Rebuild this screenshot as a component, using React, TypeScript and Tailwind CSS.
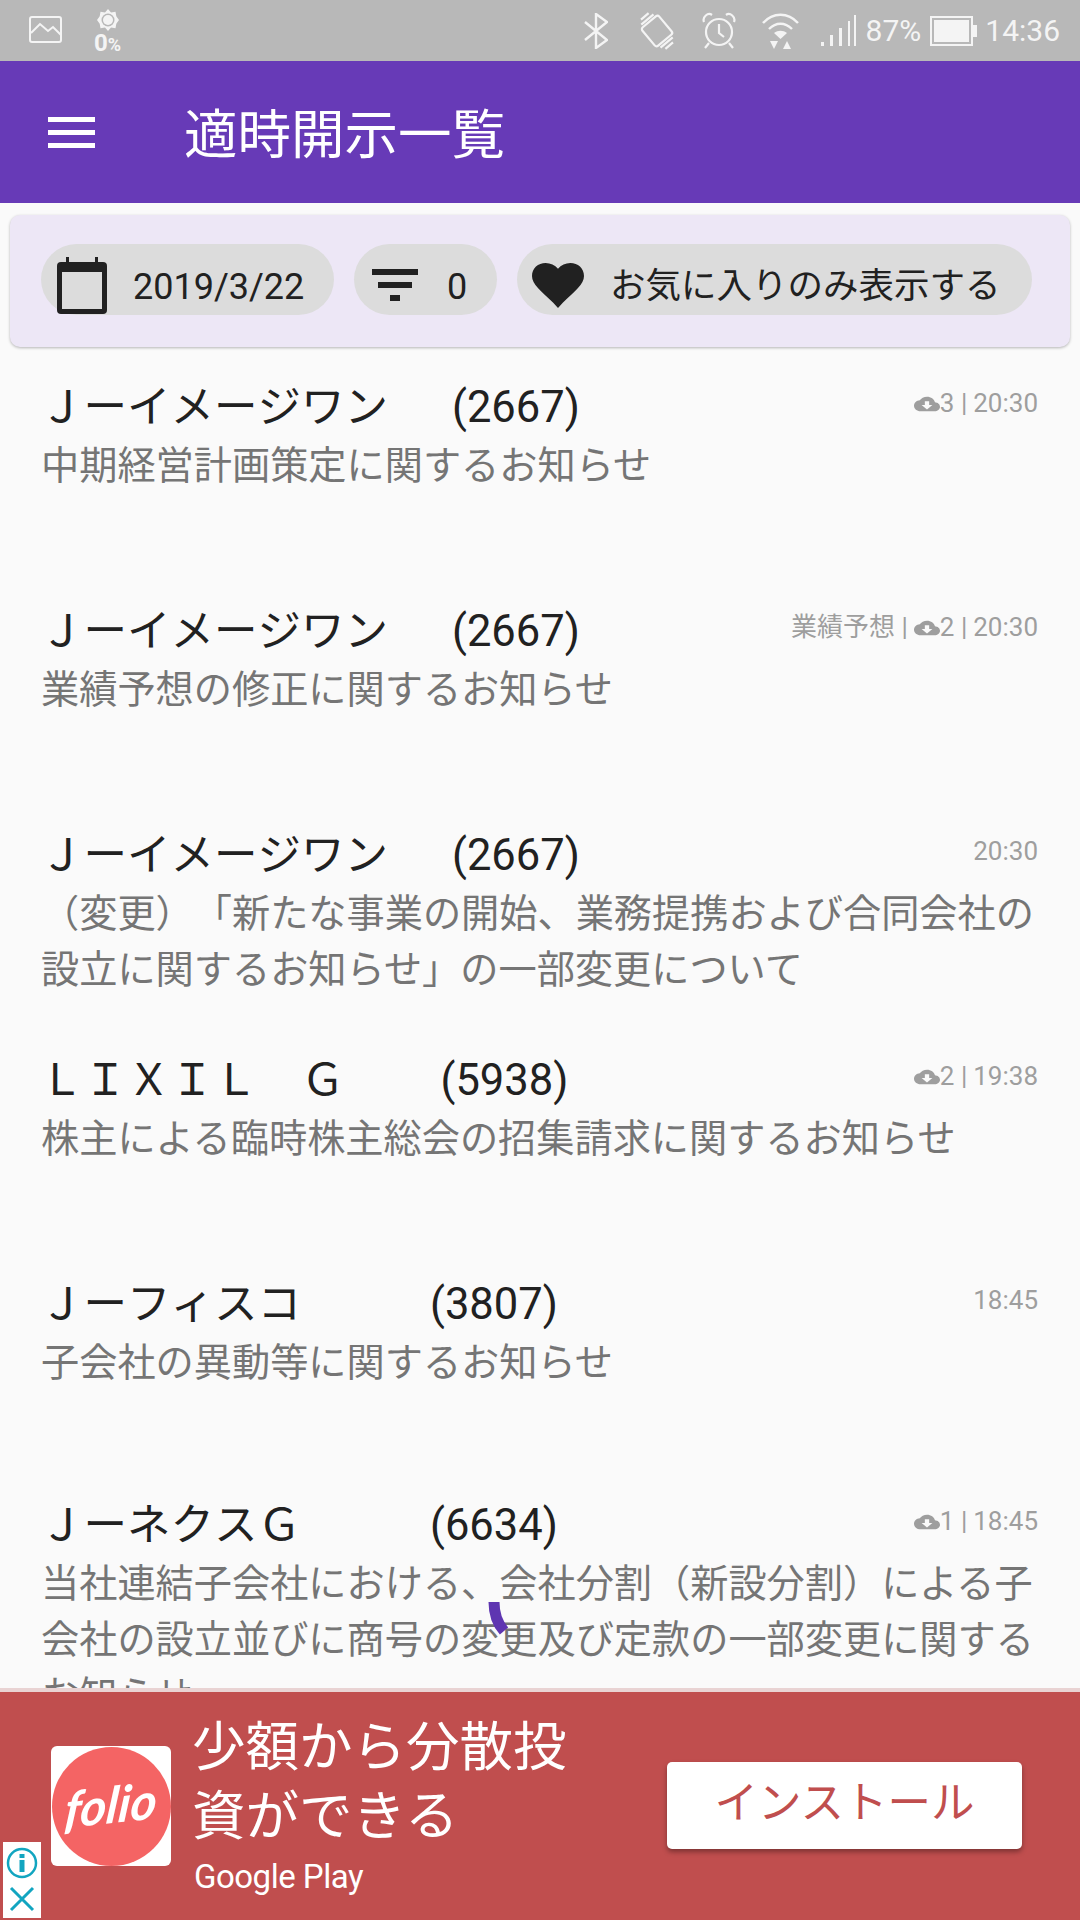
import React from 'react';

const FONT = "font-['Roboto','Noto_Sans_CJK_JP',sans-serif]";

interface Disclosure {
  name: string;
  nameGap: string;
  code: string;
  title: string;
  tag?: string;
  downloads?: number;
  time: string;
  rowHeight: string;
}

const disclosures: Disclosure[] = [
  { name: 'Ｊーイメージワン', nameGap: 'ml-[64px]', code: '(2667)', title: '中期経営計画策定に関するお知らせ', downloads: 3, time: '20:30', rowHeight: 'h-[224px]' },
  { name: 'Ｊーイメージワン', nameGap: 'ml-[64px]', code: '(2667)', title: '業績予想の修正に関するお知らせ', tag: '業績予想', downloads: 2, time: '20:30', rowHeight: 'h-[224px]' },
  { name: 'Ｊーイメージワン', nameGap: 'ml-[64px]', code: '(2667)', title: '（変更）「新たな事業の開始、業務提携および合同会社の設立に関するお知らせ」の一部変更について', time: '20:30', rowHeight: 'h-[225px]' },
  { name: 'ＬＩＸＩＬ　Ｇ', nameGap: 'ml-[96px]', code: '(5938)', title: '株主による臨時株主総会の招集請求に関するお知らせ', downloads: 2, time: '19:38', rowHeight: 'h-[224px]' },
  { name: 'Ｊーフィスコ', nameGap: 'ml-[129px]', code: '(3807)', title: '子会社の異動等に関するお知らせ', time: '18:45', rowHeight: 'h-[221px]' },
  { name: 'ＪーネクスＧ', nameGap: 'ml-[129px]', code: '(6634)', title: '当社連結子会社における、会社分割（新設分割）による子会社の設立並びに商号の変更及び定款の一部変更に関するお知らせ', downloads: 1, time: '18:45', rowHeight: 'h-[224px]' },
];

const StatusIcons: React.FC = () => (
  <div className="flex items-center text-[#f4f4f4]">
    {/* bluetooth */}
    <svg width="24" height="36" viewBox="0 0 24 36" fill="none" stroke="currentColor" strokeWidth="2.4" className="mr-[28px]">
      <path d="M1 9l22 18-11 8V1l11 8L1 27" />
    </svg>
    {/* auto rotate */}
    <svg width="42" height="38" viewBox="0 0 42 38" fill="none" stroke="currentColor" strokeWidth="2.2" className="mr-[24px]">
      <rect x="10" y="7" width="22" height="24" rx="2.5" transform="rotate(-40 21 19)" />
      <path d="M5.300 12.600L17.500 2.400M5 7.600L12.600 1.200M36.700 25.400L24.500 35.600M37 30.400L29.400 36.800" />
    </svg>
    {/* alarm */}
    <svg width="34" height="37" viewBox="0 0 34 37" fill="none" stroke="currentColor" strokeWidth="2.2" className="mr-[26px]">
      <circle cx="17" cy="20" r="13" />
      <path d="M17 12v9l5 4M2 10c-2-5 4-10 8-7M32 10c2-5-4-10-8-7M7 31l-4 5M27 31l4 5" />
    </svg>
    {/* wifi */}
    <svg width="37" height="37" viewBox="0 0 37 37" fill="none" stroke="currentColor" strokeWidth="2.4" className="mr-[22px]">
      <path d="M1 11c10-11 25-11 35 0M7 17c7-7 16-7 23 0" />
      <path d="M12 21c4-3 9-3 13 0l-6.500 6z" fill="currentColor" stroke="none" />
      <path d="M8 29h8l-4 8zM25 29l4 8h-8z" fill="currentColor" stroke="none" />
    </svg>
    {/* signal */}
    <svg width="35" height="32" viewBox="0 0 35 32" fill="currentColor" className="mr-[10px]">
      <rect x="0" y="27" width="3" height="4" />
      <rect x="9" y="20" width="3" height="11" />
      <rect x="18" y="13" width="3" height="18" />
      <rect x="27" y="6" width="2" height="25" />
      <rect x="33" y="0" width="2" height="31" />
    </svg>
    <span className="text-[30px] leading-none mr-[9px]">87%</span>
    {/* battery */}
    <svg width="47" height="30" viewBox="0 0 47 30" className="mr-[8px]">
      <rect x="1" y="1" width="41" height="28" fill="none" stroke="currentColor" strokeWidth="2" />
      <rect x="4" y="4" width="35" height="22" fill="currentColor" />
      <rect x="43" y="9" width="4" height="12" fill="currentColor" />
    </svg>
    <span className="text-[30px] leading-none">14:36</span>
  </div>
);

const StatusBar: React.FC = () => (
  <div className="h-[61px] shrink-0 bg-[#b8b8b8] flex items-center justify-between pl-[29px] pr-[20px]">
    <div className="flex items-start text-[#f4f4f4]">
      <svg width="33" height="27" viewBox="0 0 33 27" fill="none" stroke="currentColor" strokeWidth="2" className="mt-[7px] mr-[32px]">
        <rect x="1" y="1" width="31" height="25" rx="2" />
        <path d="M2 17l9-9 8 7 5-4 8 8" />
      </svg>
      <div className="flex flex-col items-center w-[27px]">
        <svg width="22" height="22" viewBox="0 0 22 22" fill="currentColor">
          <path d="M11 0l3 3.500 4.500-.8.800 4.500L22 11l-2.700 3.800-.8 4.500-4.500-.8L11 22l-3-3.500-4.500.8-.8-4.500L0 11l2.700-3.800.8-4.500 4.500.8z" />
          <circle cx="11" cy="11" r="6.500" fill="#b8b8b8" />
          <circle cx="11" cy="11" r="5" />
        </svg>
        <div className="h-[20px] mt-[2px] leading-[20px] whitespace-nowrap font-bold">
          <span className="text-[24px]">0</span>
          <span className="text-[18px]">%</span>
        </div>
      </div>
    </div>
    <StatusIcons />
  </div>
);

const AppBar: React.FC = () => (
  <div className="h-[142px] shrink-0 bg-[#673ab7] flex items-center pl-[48px]">
    <div className="w-[47px] flex flex-col gap-[8px]">
      <div className="h-[5px] bg-white" />
      <div className="h-[5px] bg-white" />
      <div className="h-[5px] bg-white" />
    </div>
    <h1 className="ml-[89px] mt-[7px] text-[53.500px] leading-none text-white font-normal">適時開示一覧</h1>
  </div>
);

const FilterBar: React.FC = () => (
  <div className="mx-[10px] mt-[12px] h-[132px] shrink-0 rounded-[10px] bg-[#ede7f6] shadow-[0_1px_3px_rgba(0,0,0,0.28)] flex items-start pt-[29px] pl-[31px] gap-[20px] text-[#212121] text-[36px]">
    <div className="w-[293px] h-[71px] pt-[11px] rounded-full bg-[#dcdcdc] flex items-center pl-[16px]">
      <svg width="50" height="57" viewBox="0 0 50 57" className="shrink-0">
        <rect x="9" y="0" width="3" height="8" fill="#212121" />
        <rect x="38" y="0" width="3" height="8" fill="#212121" />
        <path d="M4 5h42a4 4 0 0 1 4 4v44a4 4 0 0 1-4 4H4a4 4 0 0 1-4-4V9a4 4 0 0 1 4-4z" fill="#212121" />
        <rect x="5" y="15" width="40" height="37" fill="#dcdcdc" />
      </svg>
      <span className="ml-[26px] leading-none mt-[3px]">2019/3/22</span>
    </div>
    <div className="w-[143px] h-[71px] pt-[11px] rounded-full bg-[#dcdcdc] flex items-center pl-[18px]">
      <svg width="46" height="32" viewBox="0 0 46 32" fill="#212121" className="shrink-0">
        <rect x="0" y="0" width="46" height="6" />
        <rect x="6" y="13" width="34" height="6" />
        <rect x="18" y="26" width="10" height="6" />
      </svg>
      <span className="ml-[29px] leading-none mt-[3px]">0</span>
    </div>
    <div className="w-[515px] h-[71px] pt-[11px] rounded-full bg-[#dcdcdc] flex items-center pl-[15px]">
      <svg width="52" height="46" viewBox="0 0 24 21.500" fill="#212121" className="shrink-0" preserveAspectRatio="none">
        <path d="M12 21.500L9.800 19C4.100 13.600 0 10.200 0 6.500 0 3 2.800.500 6.300.500c2.200 0 4.300 1 5.700 2.600C13.400 1.500 15.500.500 17.700.500 21.200.500 24 3 24 6.500c0 3.700-4.100 7.100-9.800 12.500z" />
      </svg>
      <span className="ml-[26px] leading-none mt-[3px] text-[35.500px]">お気に入りのみ表示する</span>
    </div>
  </div>
);

const CloudIcon: React.FC = () => (
  <svg width="26" height="22" viewBox="0 0 24 24" preserveAspectRatio="none" fill="#9e9e9e" className="shrink-0 mt-[1px]">
    <path d="M19.350 10.040C18.670 6.590 15.640 4 12 4 9.110 4 6.600 5.640 5.350 8.040 2.340 8.360 0 10.910 0 14c0 3.310 2.690 6 6 6h13c2.760 0 5-2.240 5-5 0-2.640-2.050-4.780-4.650-4.960zM17 13l-5 5-5-5h3V9h4v4h3z" />
  </svg>
);

const DisclosureRow: React.FC<{ item: Disclosure }> = ({ item }) => (
  <div className={`${item.rowHeight} shrink-0 pl-[41px] pr-[42px] pt-[33px]`}>
    <div className="flex justify-between items-start">
      <div className="flex items-center h-[56px] -ml-[1px] text-[43.500px] leading-[56px] text-[#212121] whitespace-nowrap [font-kerning:none]">
        <span>{item.name}</span>
        <span className={item.nameGap}>{item.code}</span>
      </div>
      <div className="flex items-center h-[30px] mt-[8px] text-[26px] leading-[30px] text-[#9e9e9e] whitespace-nowrap">
        {item.tag && <span className="mr-[6px]">{item.tag} |</span>}
        {item.downloads !== undefined && <CloudIcon />}
        {item.downloads !== undefined && <span className="mr-[6px]">{item.downloads} |</span>}
        <span>{item.time}</span>
      </div>
    </div>
    <p className="mt-[2px] text-[38.200px] leading-[56px] text-[#757575] [text-spacing-trim:space-all]">{item.title}</p>
  </div>
);

const AdBanner: React.FC = () => (
  <div className="relative h-[232px] shrink-0 border-t-[4px] border-[#e9d3d3] bg-[#c04e4e] flex items-center pl-[51px] pr-[58px]">
    <div className="w-[120px] h-[120px] shrink-0 rounded-[6px] bg-white flex items-center justify-center">
      <div className="w-[119px] h-[119px] rounded-full bg-[#f46464] flex items-center justify-center">
        <span className="font-['Lato',sans-serif] italic font-bold text-[50px] leading-none text-white -rotate-6 -skew-x-12 -mt-[4px]">folio</span>
      </div>
    </div>
    <div className="ml-[21px] w-[400px] text-white">
      <p className="text-[53.500px] leading-[69px] -mt-[2px]">少額から分散投資ができる</p>
      <p className="mt-[6px] ml-[2px] text-[33px] leading-[40px] tracking-[-0.5px]">Google Play</p>
    </div>
    <div className="ml-auto -mt-[2px] w-[355px] h-[87px] pb-[3px] rounded-[5px] bg-white shadow-[0_3px_5px_rgba(0,0,0,0.35)] flex items-center justify-center text-[43.500px] leading-none text-[#c04e4e]">
      インストール
    </div>
    {/* ad choices */}
    <div className="absolute left-[3px] bottom-[2px] w-[38px] h-[76px] bg-white flex flex-col items-center justify-between py-[5px]">
      <svg width="32" height="32" viewBox="0 0 32 32" fill="none" stroke="#12a5c0">
        <circle cx="16" cy="16" r="14" strokeWidth="2.500" />
        <path d="M16 13v12" strokeWidth="5" />
        <path d="M16 7v4" strokeWidth="5" />
      </svg>
      <svg width="26" height="26" viewBox="0 0 26 26" fill="none" stroke="#12a5c0" strokeWidth="3" className="mb-[1px]">
        <path d="M2 2l22 22M24 2L2 24" />
      </svg>
    </div>
  </div>
);

const App: React.FC = () => (
  <div lang="ja" className={`relative w-[1080px] h-[1920px] overflow-hidden bg-[#fafafa] flex flex-col ${FONT}`}>
    <StatusBar />
    <AppBar />
    <FilterBar />
    <div className="flex-1 min-h-0 overflow-hidden flex flex-col">
      {disclosures.map((item, i) => (
        <DisclosureRow key={i} item={item} />
      ))}
    </div>
    <AdBanner />
    {/* pull to refresh spinner */}
    <svg width="30" height="40" viewBox="0 0 30 40" fill="none" stroke="#5e35b1" strokeWidth="11" className="absolute left-[482px] top-[1598px]">
      <path d="M12 4c0 12 3 21 10 29" />
    </svg>
  </div>
);

export default App;
